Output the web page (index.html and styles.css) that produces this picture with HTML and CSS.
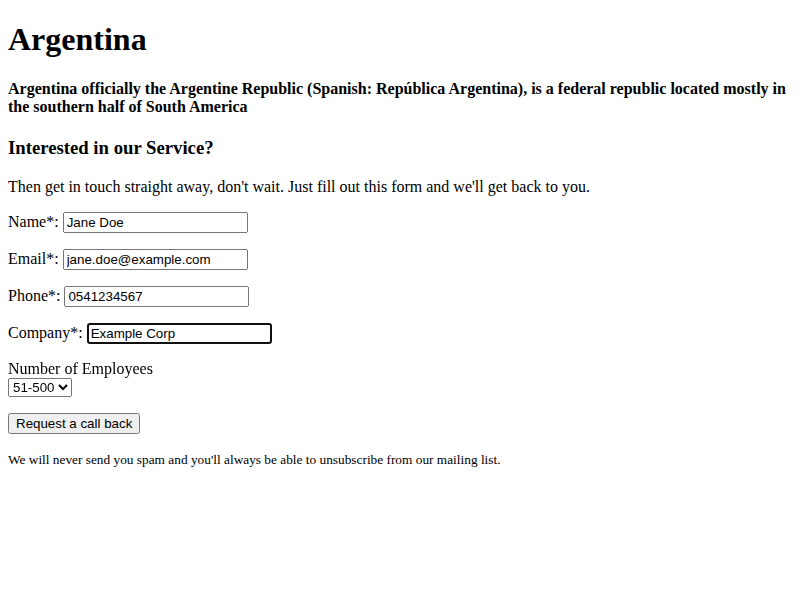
FILE: index.html
```html
<!DOCTYPE html>
<html lang="en">
<head>
<meta charset="utf-8">
<title>Argentina</title>
<link rel="stylesheet" href="styles.css">
</head>
<body>
<h1 class="title">Argentina</h1>
<h4>Argentina officially the Argentine Republic (Spanish: República Argentina), is a federal republic located mostly in the southern half of South America</h4>
<h3>Interested in our Service?</h3>
<p>Then get in touch straight away, don't wait. Just fill out this form and we'll get back to you.</p>
<form>
<p><label for="name">Name*:</label> <input class="field" id="name" type="text" value="Jane Doe"></p>
<p><label for="email">Email*:</label> <input class="field" id="email" type="text" value="jane.doe@example.com"></p>
<p><label for="phone">Phone*:</label> <input class="field" id="phone" type="text" value="0541234567"></p>
<p><label for="company">Company*:</label> <input class="field field-focus" id="company" type="text" value="Example Corp" autofocus></p>
<p><label for="emp">Number of Employees</label><br><select class="pick" id="emp"><option>1-50</option><option selected>51-500</option><option>500+</option></select></p>
<p><button class="btn" type="button">Request a call back</button></p>
<p><small class="note">We will never send you spam and you'll always be able to unsubscribe from our mailing list.</small></p>
</form>
</body>
</html>
```
FILE: styles.css
```css
body {
  margin: 0 8px 8px;
  font-family: "Liberation Serif", "Times New Roman", serif;
  color: #000;
  background: #fff;
}
.title {
  margin-top: 21.44px;
}
.field, .pick, .btn {
  font-family: "Liberation Sans", Arial, sans-serif;
  font-size: 13.333px;
}
.note {
  font-size: 13.333px;
}
```
